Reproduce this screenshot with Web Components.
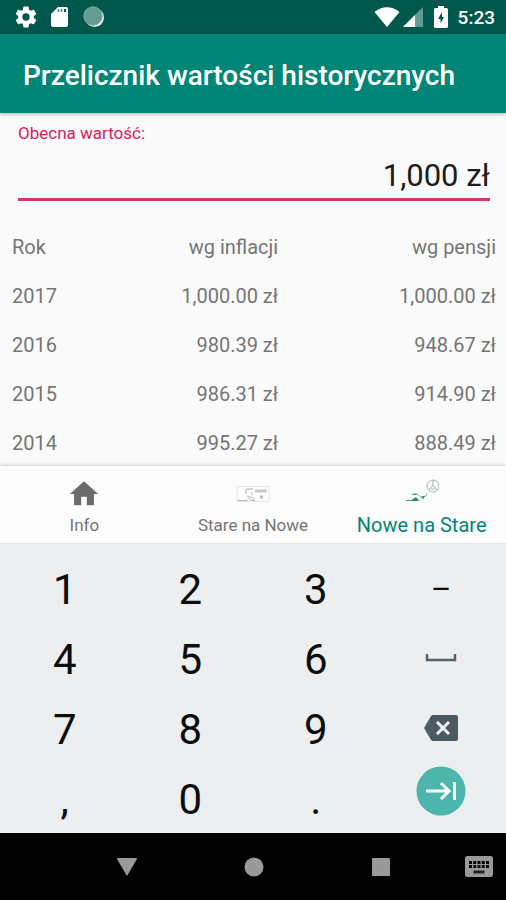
<!DOCTYPE html>
<html lang="pl">
<head>
<meta charset="utf-8">
<meta name="viewport" content="width=device-width, initial-scale=1">
<title>Przelicznik wartości historycznych</title>
<style>
  html, body { margin: 0; height: 100%; }
  body { font-family: Roboto, "Noto Sans", sans-serif; background: #fafafa; color: #757575; }
</style>
</head>
<body>
<converter-app></converter-app>

<script>
const define = (name, html) => {
  const template = document.createElement('template');
  template.innerHTML = '<style>*{box-sizing:border-box}svg{display:block;flex:none}button{font:inherit;color:inherit;background:none;border:0;margin:0;padding:0}</style>' + html;
  customElements.define(name, class extends HTMLElement {
    constructor() {
      super();
      this.attachShadow({ mode: 'open' }).append(template.content.cloneNode(true));
    }
  });
};

define('status-bar', `
<style>
  :host { display: flex; align-items: center; justify-content: space-between; flex: none; height: 34px; padding: 0 11px 0 15px; background: #00574b; color: #fff; }
  div { display: flex; align-items: center; }
  .left { gap: 12px; }
  time { font-size: 19px; font-weight: 500; line-height: 32px; margin-left: 10px; padding-top: 2px; }
</style>
<div class="left">
  <svg width="22" height="22" viewBox="1.5 1.5 21 21" fill="#fff"><path d="M19.43 12.98c.04-.32.07-.64.07-.98s-.03-.66-.07-.98l2.11-1.65c.19-.15.24-.42.12-.64l-2-3.46c-.12-.22-.39-.3-.61-.22l-2.49 1c-.52-.4-1.08-.73-1.69-.98l-.38-2.65A.49.49 0 0 0 14 2h-4c-.25 0-.46.18-.49.42l-.38 2.65c-.61.25-1.17.59-1.69.98l-2.49-1c-.23-.09-.49 0-.61.22l-2 3.46c-.13.22-.07.49.12.64l2.11 1.65c-.04.32-.07.65-.07.98s.03.66.07.98l-2.11 1.65c-.19.15-.24.42-.12.64l2 3.46c.12.22.39.3.61.22l2.49-1c.52.4 1.08.73 1.69.98l.38 2.65c.03.24.24.42.49.42h4c.25 0 .46-.18.49-.42l.38-2.65c.61-.25 1.17-.59 1.69-.98l2.49 1c.23.09.49 0 .61-.22l2-3.46c.12-.22.07-.49-.12-.64zM12 15.5a3.5 3.5 0 1 1 0-7 3.5 3.5 0 0 1 0 7z"/></svg>
  <svg width="22" height="22" viewBox="0 0 22 22"><path fill="#fff" d="M9 1h8a2 2 0 0 1 2 2v16a2 2 0 0 1-2 2H4a2 2 0 0 1-2-2V8z"/><path stroke="#4d7f77" stroke-width="1.500" d="M9.500 3v3M12.500 3v3"/><path stroke="#00574b" stroke-width="2" d="M16 3v3"/></svg>
  <svg width="22" height="22" viewBox="0 0 22 22"><circle cx="11.500" cy="11.500" r="9.500" fill="#e6f1ef"/><circle cx="10" cy="10" r="9.500" fill="#629b92"/><circle cx="10" cy="10" r="9" fill="none" stroke="#7fada6"/></svg>
</div>
<div>
  <svg width="26" height="22" viewBox="0 0 26 22" fill="#fff"><path d="M.5 6C7.500-.3 18.500-.3 25.500 6L13 21z"/></svg>
  <svg width="20" height="20" viewBox="0 0 20 20" style="margin-left:3px"><path fill="#629b92" d="M20 0v20H0z"/><path fill="#fff" d="M12 8v12H0z"/></svg>
  <svg width="14" height="22" viewBox="0 0 14 22" style="margin-left:11px"><path fill="#fff" d="M4 0h6v2h2.500Q14 2 14 3.500v17q0 1.500-1.500 1.500h-11Q0 22 0 20.500v-17Q0 2 1.500 2H4z"/><path fill="#00574b" d="M8 6 4 13h2.500v4.500L10 11H8z"/></svg>
  <time>5:23</time>
</div>`);

define('app-header', `
<style>
  :host { display: flex; align-items: center; flex: none; min-height: 79px; padding: 4px 23px 0; background: #008577; color: #fff; box-shadow: 0 1px 4px rgba(0,0,0,.3); position: relative; }
  h1 { margin: 0; font-size: 28px; line-height: 36px; font-weight: 500; white-space: nowrap; }
</style>
<h1><slot></slot></h1>`);

define('value-field', `
<style>
  :host { display: flex; flex-direction: column; flex: none; padding: 10px 16px 0 18px; }
  label { font-size: 17px; line-height: 20px; color: #d81b60; }
  input { font: inherit; font-size: 31px; line-height: 40px; height: 58px; width: 100%; text-align: right; color: #1c1c1c; background: none; border: 0; border-bottom: 3px solid #d43763; border-radius: 0; outline: 0; padding: 9px 0 0; margin: 0; }
</style>
<label for="value">Obecna wartość:</label>
<input id="value" type="text" inputmode="numeric" value="1,000 zł">`);

define('history-table', `
<style>
  :host { display: block; flex: 1 1 0; min-height: 0; overflow: hidden; padding: 22px 10px 0 12px; }
  table { width: 100%; border-collapse: collapse; table-layout: fixed; font-size: 20px; line-height: 25px; }
  th, td { height: 49px; padding: 0; font-weight: 400; text-align: right; white-space: nowrap; }
  th:first-child { text-align: left; }
  col:first-child { width: 20%; } col:nth-child(2) { width: 35%; }
</style>
<table>
  <colgroup><col><col><col></colgroup>
  <thead><tr><th scope="col">Rok</th><th scope="col">wg inflacji</th><th scope="col">wg pensji</th></tr></thead>
  <tbody>
    <tr><th scope="row">2017</th><td>1,000.00 zł</td><td>1,000.00 zł</td></tr>
    <tr><th scope="row">2016</th><td>980.39 zł</td><td>948.67 zł</td></tr>
    <tr><th scope="row">2015</th><td>986.31 zł</td><td>914.90 zł</td></tr>
    <tr><th scope="row">2014</th><td>995.27 zł</td><td>888.49 zł</td></tr>
  </tbody>
</table>`);

define('tab-item', `
<style>
  :host { display: flex; flex: 1 1 0; color: #757575; font-size: 17px; }
  :host([active]) { color: #008577; font-size: 20px; }
  button { flex: 1; display: flex; flex-direction: column; align-items: center; justify-content: flex-end; padding-bottom: 6px; line-height: 24px; white-space: nowrap; }
  .icon { height: 34px; display: flex; align-items: center; margin-bottom: 2px; }
</style>
<button type="button"><span class="icon"><slot name="icon"></slot></span><slot></slot></button>`);

define('bottom-tabs', `
<style>
  :host { display: flex; flex: none; height: 77px; background: #fcfcfc; box-shadow: 0 -1px 3px rgba(0,0,0,.2); position: relative; }
</style>
<tab-item>Info
  <svg slot="icon" width="34" height="34" viewBox="0 0 24 24" fill="#6b6b6b"><path d="M10 20v-6h4v6h5v-8h3L12 3 2 12h3v8z"/></svg>
</tab-item>
<tab-item>Stare na Nowe
  <svg slot="icon" width="34" height="34" viewBox="0 0 34 34" fill="none"><path stroke="#e6e6e6" d="M1 9.500h32v15H1z"/><path stroke="#aaa" d="M10 17v-4q1-2 3-1h4"/><path stroke="#b5b5b5" d="M1 23.500h10l2-2 2 2h4M11 19l6 2 1 2M15 15l2 3"/><path stroke="#c8c8c8" stroke-width="3" d="M19 14h12"/><path stroke="#bbb" stroke-width="3" d="M24 20h3"/></svg>
</tab-item>
<tab-item active>Nowe na Stare
  <svg slot="icon" width="34" height="34" viewBox="0 0 34 34" fill="none"><g stroke="#9dbcb4"><circle cx="28" cy="9" r="6"/><path d="M28 3v5l-4 5M28 8l4 5M26 12h4"/><path d="M7 18q2-3 5-1l4 3 5-1 1-3"/></g><path stroke="#4d9d88" d="M1 23.500h6l4-3 3 3M7 17.500h5M16 20l3 2"/><path fill="#278a72" d="M7 22.500l4-2 3 3.500H7zM17 19h3l-2 3z"/></svg>
</tab-item>`);

define('num-key', `
<style>
  :host { display: flex; color: #0b0d0e; font-size: 42px; }
  :host([kind="dash"]) { font-size: 31px; }
  button { flex: 1; display: flex; align-items: center; justify-content: center; padding-top: 2px; line-height: 68px; }
  :host([kind="icon"]) button { padding: 0 0 3px; }
  :host([kind="action"]) button { padding: 0 0 16px; }
</style>
<button type="button"><slot></slot></button>`);

define('num-pad', `
<style>
  :host { display: grid; flex: none; grid-template-columns: repeat(4, 1fr); grid-auto-rows: 70px; padding: 11px 2px 0; margin-bottom: -1px; background: #eceef0; }
</style>
<num-key>1</num-key><num-key>2</num-key><num-key>3</num-key><num-key kind="dash">–</num-key>
<num-key>4</num-key><num-key>5</num-key><num-key>6</num-key>
<num-key kind="icon"><svg width="32" height="8" viewBox="0 0 32 8" role="img" aria-label="Spacja"><path fill="none" stroke="#52636b" stroke-width="2.500" d="M2 0v6h28V0"/></svg></num-key>
<num-key>7</num-key><num-key>8</num-key><num-key>9</num-key>
<num-key kind="icon"><svg width="34" height="26" viewBox="0 0 34 26" role="img" aria-label="Usuń"><path fill="#4a5b64" d="M9 0h23q2 0 2 2v22q0 2-2 2H9q-1 0-2-1L0 13l7-12q1-1 2-1z"/><path stroke="#f0f3f4" stroke-width="3" d="M13 7l12 12M25 7 13 19"/></svg></num-key>
<num-key>,</num-key><num-key>0</num-key><num-key>.</num-key>
<num-key kind="action"><svg width="50" height="50" viewBox="0 0 50 50" role="img" aria-label="Dalej"><circle cx="25" cy="25" r="24.500" fill="#4db6ac"/><path fill="none" stroke="#fff" stroke-width="3" d="M10 25h23M25 17l8 8-8 8M38.500 16v18"/></svg></num-key>`);

define('system-nav', `
<style>
  :host { display: block; flex: none; height: 67px; background: #000; position: relative; }
  nav { display: flex; height: 100%; padding: 0 62px 0 64px; }
  button { flex: 1; display: flex; align-items: center; justify-content: center; }
  .keyboard { position: absolute; right: 12px; top: 0; bottom: 0; }
</style>
<nav>
  <button type="button" aria-label="Wstecz"><svg width="20" height="18" viewBox="0 0 20 18" fill="#999"><path d="M1 0h18q1 0 1 1L10 18 0 1q0-1 1-1z"/></svg></button>
  <button type="button" aria-label="Ekran główny"><svg width="20" height="20" viewBox="0 0 20 20" fill="#999"><circle cx="10" cy="10" r="9.500"/></svg></button>
  <button type="button" aria-label="Ostatnie"><svg width="18" height="18" viewBox="0 0 18 18" fill="#999"><rect width="18" height="18" rx="1"/></svg></button>
</nav>
<button class="keyboard" type="button" aria-label="Klawiatura"><svg width="30" height="22" viewBox="0 0 30 22"><rect x="1" y="0" width="28" height="21" rx="2.500" fill="#999"/><path stroke="#000" stroke-width="3" stroke-dasharray="3 1.250" d="M5 6.500h20M5 10.500h20"/><path stroke="#222" stroke-width="3" d="M9.500 16h11"/></svg></button>`);

define('converter-app', `
<style>
  :host { display: flex; flex-direction: column; min-height: 100vh; }
</style>
<status-bar></status-bar>
<app-header>Przelicznik wartości historycznych</app-header>
<value-field></value-field>
<history-table></history-table>
<bottom-tabs></bottom-tabs>
<num-pad></num-pad>
<system-nav></system-nav>`);
</script>
</body>
</html>
